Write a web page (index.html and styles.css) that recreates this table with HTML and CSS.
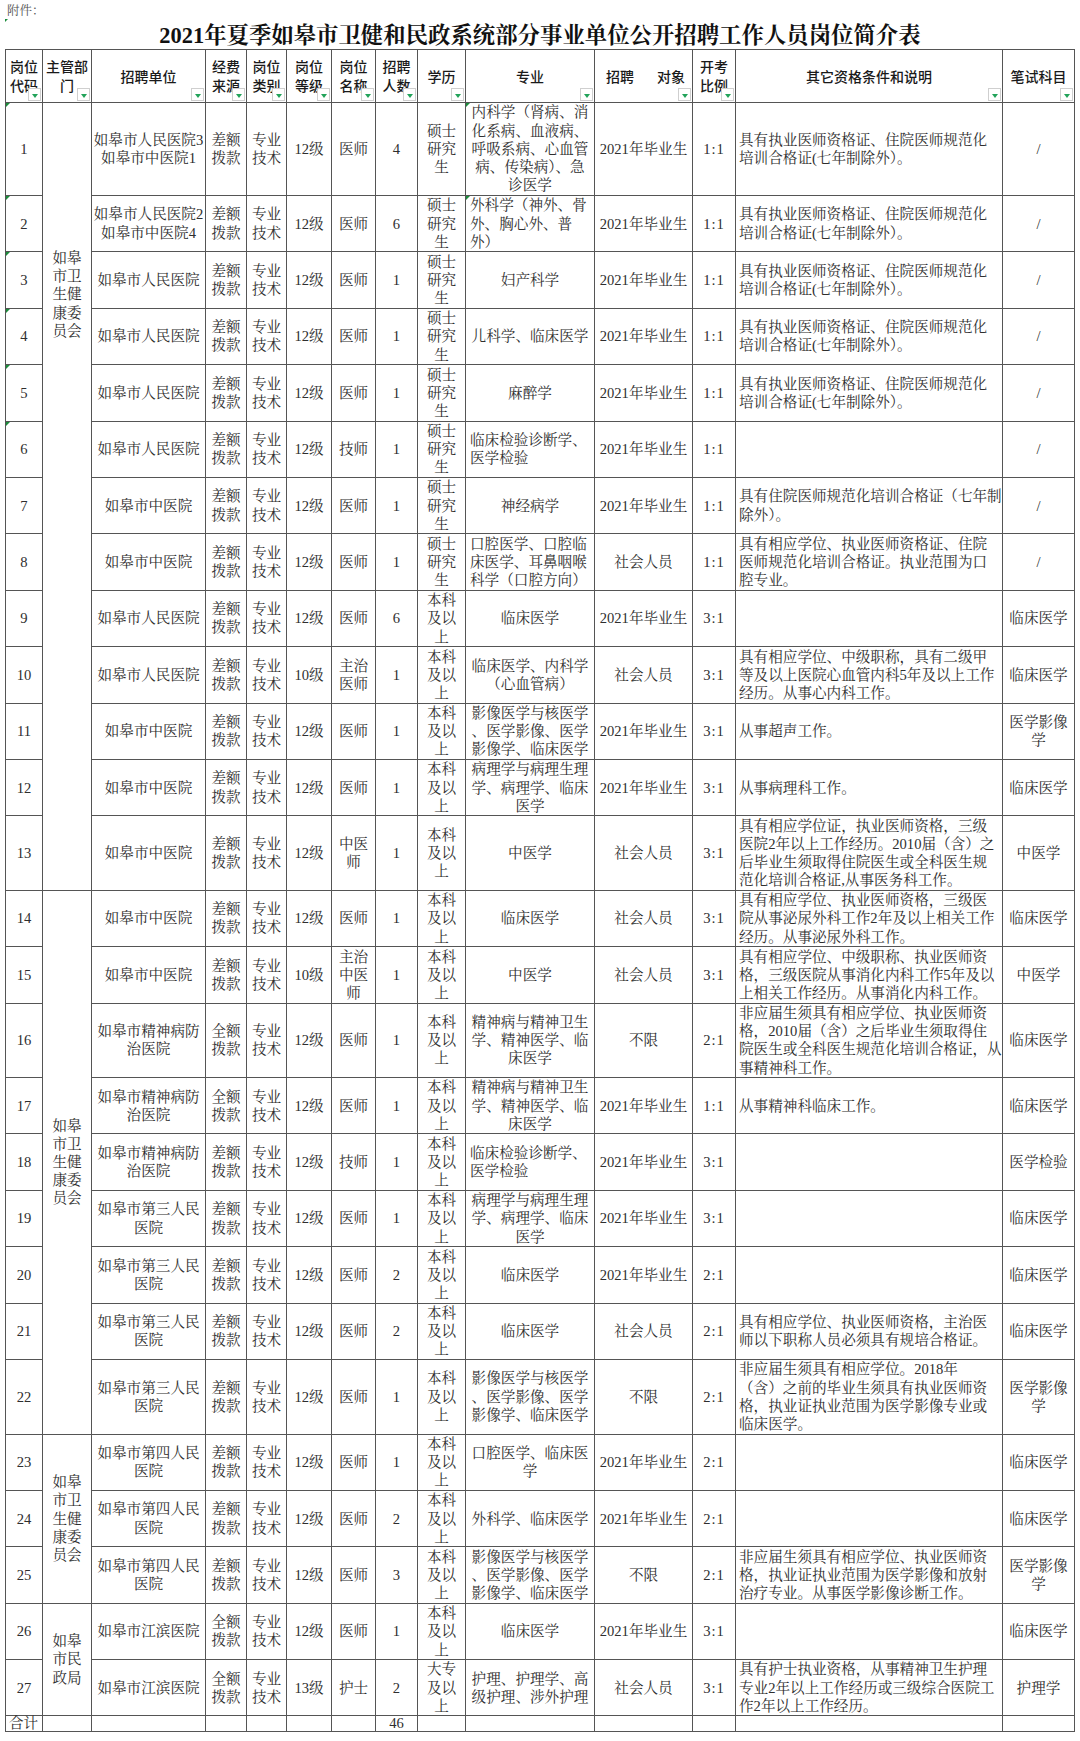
FILE: index.html
```html
<!DOCTYPE html>
<html lang="zh-CN">
<head>
<meta charset="utf-8">
<title>2021年夏季如皋市卫健和民政系统部分事业单位公开招聘工作人员岗位简介表</title>
<link rel="stylesheet" href="styles.css">
</head>
<body>
<div class="page">
  <div class="note">附件：<span class="nmk"></span></div>
  <h1 class="title">2021年夏季如皋市卫健和民政系统部分事业单位公开招聘工作人员岗位简介表</h1>
  <table class="tbl">
    <colgroup>
      <col class="w1"><col class="w2"><col class="w3"><col class="w4"><col class="w5"><col class="w6"><col class="w7"><col class="w8"><col class="w9"><col class="w10"><col class="w11"><col class="w12"><col class="w13"><col class="w14">
    </colgroup>
    <thead>
      <tr class="rh">
        <th>岗位<br>代码<span class="fb"></span></th>
        <th>主管部<br>门<span class="fb"></span></th>
        <th>招聘单位<span class="fb"></span></th>
        <th>经费<br>来源<span class="fb"></span></th>
        <th>岗位<br>类别<span class="fb"></span></th>
        <th>岗位<br>等级<span class="fb"></span></th>
        <th>岗位<br>名称<span class="fb"></span></th>
        <th>招聘<br>人数<span class="fb"></span></th>
        <th>学历<span class="fb"></span></th>
        <th>专业<span class="fb"></span></th>
        <th class="tgt"><span class="sp">招聘</span><span>对象</span><span class="fb"></span></th>
        <th>开考<br>比例<span class="fb"></span></th>
        <th>其它资格条件和说明<span class="fb"></span></th>
        <th>笔试科目<span class="fb"></span></th>
      </tr>
    </thead>
    <tbody>
      <tr class="r93">
        <td class="mk">1</td>
        <td rowspan="13" class="dept dtop">如皋<br>市卫<br>生健<br>康委<br>员会</td>
        <td class="u">如皋市人民医院3<br>如皋市中医院1</td>
        <td>差额<br>拨款</td><td>专业<br>技术</td><td>12级</td><td>医师</td><td>4</td>
        <td>硕士<br>研究<br>生</td>
        <td class="m mk">内科学（肾病、消<br>化系病、血液病、<br>呼吸系病、心血管<br>病、传染病）、急<br>诊医学</td>
        <td>2021年毕业生</td><td class="ra">1:1</td>
        <td class="q">具有执业医师资格证、住院医师规范化<br>培训合格证(七年制除外）。</td>
        <td>/</td>
      </tr>
      <tr class="rs">
        <td class="mk">2</td>
        <td class="u">如皋市人民医院2<br>如皋市中医院4</td>
        <td>差额<br>拨款</td><td>专业<br>技术</td><td>12级</td><td>医师</td><td>6</td>
        <td>硕士<br>研究<br>生</td>
        <td class="m ml mk">外科学（神外、骨<br>外、胸心外、普<br>外）</td>
        <td>2021年毕业生</td><td class="ra">1:1</td>
        <td class="q">具有执业医师资格证、住院医师规范化<br>培训合格证(七年制除外）。</td>
        <td>/</td>
      </tr>
      <tr class="rs">
        <td class="mk">3</td>
        <td class="u">如皋市人民医院</td>
        <td>差额<br>拨款</td><td>专业<br>技术</td><td>12级</td><td>医师</td><td>1</td>
        <td>硕士<br>研究<br>生</td>
        <td class="m">妇产科学</td>
        <td>2021年毕业生</td><td class="ra">1:1</td>
        <td class="q">具有执业医师资格证、住院医师规范化<br>培训合格证(七年制除外）。</td>
        <td>/</td>
      </tr>
      <tr class="rs">
        <td class="mk">4</td>
        <td class="u">如皋市人民医院</td>
        <td>差额<br>拨款</td><td>专业<br>技术</td><td>12级</td><td>医师</td><td>1</td>
        <td>硕士<br>研究<br>生</td>
        <td class="m">儿科学、临床医学</td>
        <td>2021年毕业生</td><td class="ra">1:1</td>
        <td class="q">具有执业医师资格证、住院医师规范化<br>培训合格证(七年制除外）。</td>
        <td>/</td>
      </tr>
      <tr class="rs">
        <td class="mk">5</td>
        <td class="u">如皋市人民医院</td>
        <td>差额<br>拨款</td><td>专业<br>技术</td><td>12级</td><td>医师</td><td>1</td>
        <td>硕士<br>研究<br>生</td>
        <td class="m">麻醉学</td>
        <td>2021年毕业生</td><td class="ra">1:1</td>
        <td class="q">具有执业医师资格证、住院医师规范化<br>培训合格证(七年制除外）。</td>
        <td>/</td>
      </tr>
      <tr class="rs">
        <td class="mk">6</td>
        <td class="u">如皋市人民医院</td>
        <td>差额<br>拨款</td><td>专业<br>技术</td><td>12级</td><td>技师</td><td>1</td>
        <td>硕士<br>研究<br>生</td>
        <td class="m ml">临床检验诊断学、<br>医学检验</td>
        <td>2021年毕业生</td><td class="ra">1:1</td>
        <td class="q"></td>
        <td>/</td>
      </tr>
      <tr class="rs">
        <td>7</td>
        <td class="u">如皋市中医院</td>
        <td>差额<br>拨款</td><td>专业<br>技术</td><td>12级</td><td>医师</td><td>1</td>
        <td>硕士<br>研究<br>生</td>
        <td class="m">神经病学</td>
        <td>2021年毕业生</td><td class="ra">1:1</td>
        <td class="q">具有住院医师规范化培训合格证（七年制<br>除外）。</td>
        <td>/</td>
      </tr>
      <tr class="rs">
        <td>8</td>
        <td class="u">如皋市中医院</td>
        <td>差额<br>拨款</td><td>专业<br>技术</td><td>12级</td><td>医师</td><td>1</td>
        <td>硕士<br>研究<br>生</td>
        <td class="m ml">口腔医学、口腔临<br>床医学、耳鼻咽喉<br>科学（口腔方向）</td>
        <td>社会人员</td><td class="ra">1:1</td>
        <td class="q">具有相应学位、执业医师资格证、住院<br>医师规范化培训合格证。执业范围为口<br>腔专业。</td>
        <td>/</td>
      </tr>
      <tr class="rs">
        <td>9</td>
        <td class="u">如皋市人民医院</td>
        <td>差额<br>拨款</td><td>专业<br>技术</td><td>12级</td><td>医师</td><td>6</td>
        <td>本科<br>及以<br>上</td>
        <td class="m">临床医学</td>
        <td>2021年毕业生</td><td class="ra">3:1</td>
        <td class="q"></td>
        <td>临床医学</td>
      </tr>
      <tr class="rs">
        <td>10</td>
        <td class="u">如皋市人民医院</td>
        <td>差额<br>拨款</td><td>专业<br>技术</td><td>10级</td><td>主治<br>医师</td><td>1</td>
        <td>本科<br>及以<br>上</td>
        <td class="m">临床医学、内科学<br>（心血管病）</td>
        <td>社会人员</td><td class="ra">3:1</td>
        <td class="q">具有相应学位、中级职称，具有二级甲<br>等及以上医院心血管内科5年及以上工作<br>经历。从事心内科工作。</td>
        <td>临床医学</td>
      </tr>
      <tr class="rs">
        <td>11</td>
        <td class="u">如皋市中医院</td>
        <td>差额<br>拨款</td><td>专业<br>技术</td><td>12级</td><td>医师</td><td>1</td>
        <td>本科<br>及以<br>上</td>
        <td class="m">影像医学与核医学<br>、医学影像、医学<br>影像学、临床医学</td>
        <td>2021年毕业生</td><td class="ra">3:1</td>
        <td class="q">从事超声工作。</td>
        <td>医学影像<br>学</td>
      </tr>
      <tr class="rs">
        <td>12</td>
        <td class="u">如皋市中医院</td>
        <td>差额<br>拨款</td><td>专业<br>技术</td><td>12级</td><td>医师</td><td>1</td>
        <td>本科<br>及以<br>上</td>
        <td class="m">病理学与病理生理<br>学、病理学、临床<br>医学</td>
        <td>2021年毕业生</td><td class="ra">3:1</td>
        <td class="q">从事病理科工作。</td>
        <td>临床医学</td>
      </tr>
      <tr class="rt">
        <td>13</td>
        <td class="u">如皋市中医院</td>
        <td>差额<br>拨款</td><td>专业<br>技术</td><td>12级</td><td>中医<br>师</td><td>1</td>
        <td>本科<br>及以<br>上</td>
        <td class="m">中医学</td>
        <td>社会人员</td><td class="ra">3:1</td>
        <td class="q">具有相应学位证，执业医师资格，三级<br>医院2年以上工作经历。2010届（含）之<br>后毕业生须取得住院医生或全科医生规<br>范化培训合格证,从事医务科工作。</td>
        <td>中医学</td>
      </tr>
      <tr class="rs">
        <td>14</td>
        <td rowspan="9" class="dept">如皋<br>市卫<br>生健<br>康委<br>员会</td>
        <td class="u">如皋市中医院</td>
        <td>差额<br>拨款</td><td>专业<br>技术</td><td>12级</td><td>医师</td><td>1</td>
        <td>本科<br>及以<br>上</td>
        <td class="m">临床医学</td>
        <td>社会人员</td><td class="ra">3:1</td>
        <td class="q">具有相应学位、执业医师资格，三级医<br>院从事泌尿外科工作2年及以上相关工作<br>经历。从事泌尿外科工作。</td>
        <td>临床医学</td>
      </tr>
      <tr class="rs">
        <td>15</td>
        <td class="u">如皋市中医院</td>
        <td>差额<br>拨款</td><td>专业<br>技术</td><td>10级</td><td>主治<br>中医<br>师</td><td>1</td>
        <td>本科<br>及以<br>上</td>
        <td class="m">中医学</td>
        <td>社会人员</td><td class="ra">3:1</td>
        <td class="q">具有相应学位、中级职称、执业医师资<br>格，三级医院从事消化内科工作5年及以<br>上相关工作经历。从事消化内科工作。</td>
        <td>中医学</td>
      </tr>
      <tr class="rt">
        <td>16</td>
        <td class="u">如皋市精神病防<br>治医院</td>
        <td>全额<br>拨款</td><td>专业<br>技术</td><td>12级</td><td>医师</td><td>1</td>
        <td>本科<br>及以<br>上</td>
        <td class="m">精神病与精神卫生<br>学、精神医学、临<br>床医学</td>
        <td>不限</td><td class="ra">2:1</td>
        <td class="q">非应届生须具有相应学位、执业医师资<br>格，2010届（含）之后毕业生须取得住<br>院医生或全科医生规范化培训合格证，从<br>事精神科工作。</td>
        <td>临床医学</td>
      </tr>
      <tr class="rs">
        <td>17</td>
        <td class="u">如皋市精神病防<br>治医院</td>
        <td>全额<br>拨款</td><td>专业<br>技术</td><td>12级</td><td>医师</td><td>1</td>
        <td>本科<br>及以<br>上</td>
        <td class="m">精神病与精神卫生<br>学、精神医学、临<br>床医学</td>
        <td>2021年毕业生</td><td class="ra">1:1</td>
        <td class="q">从事精神科临床工作。</td>
        <td>临床医学</td>
      </tr>
      <tr class="rs">
        <td>18</td>
        <td class="u">如皋市精神病防<br>治医院</td>
        <td>差额<br>拨款</td><td>专业<br>技术</td><td>12级</td><td>技师</td><td>1</td>
        <td>本科<br>及以<br>上</td>
        <td class="m ml">临床检验诊断学、<br>医学检验</td>
        <td>2021年毕业生</td><td class="ra">3:1</td>
        <td class="q"></td>
        <td>医学检验</td>
      </tr>
      <tr class="rs">
        <td>19</td>
        <td class="u">如皋市第三人民<br>医院</td>
        <td>差额<br>拨款</td><td>专业<br>技术</td><td>12级</td><td>医师</td><td>1</td>
        <td>本科<br>及以<br>上</td>
        <td class="m">病理学与病理生理<br>学、病理学、临床<br>医学</td>
        <td>2021年毕业生</td><td class="ra">3:1</td>
        <td class="q"></td>
        <td>临床医学</td>
      </tr>
      <tr class="rs">
        <td>20</td>
        <td class="u">如皋市第三人民<br>医院</td>
        <td>差额<br>拨款</td><td>专业<br>技术</td><td>12级</td><td>医师</td><td>2</td>
        <td>本科<br>及以<br>上</td>
        <td class="m">临床医学</td>
        <td>2021年毕业生</td><td class="ra">2:1</td>
        <td class="q"></td>
        <td>临床医学</td>
      </tr>
      <tr class="rs">
        <td>21</td>
        <td class="u">如皋市第三人民<br>医院</td>
        <td>差额<br>拨款</td><td>专业<br>技术</td><td>12级</td><td>医师</td><td>2</td>
        <td>本科<br>及以<br>上</td>
        <td class="m">临床医学</td>
        <td>社会人员</td><td class="ra">2:1</td>
        <td class="q">具有相应学位、执业医师资格，主治医<br>师以下职称人员必须具有规培合格证。</td>
        <td>临床医学</td>
      </tr>
      <tr class="rt">
        <td>22</td>
        <td class="u">如皋市第三人民<br>医院</td>
        <td>差额<br>拨款</td><td>专业<br>技术</td><td>12级</td><td>医师</td><td>1</td>
        <td>本科<br>及以<br>上</td>
        <td class="m">影像医学与核医学<br>、医学影像、医学<br>影像学、临床医学</td>
        <td>不限</td><td class="ra">2:1</td>
        <td class="q">非应届生须具有相应学位。2018年<br>（含）之前的毕业生须具有执业医师资<br>格，执业证执业范围为医学影像专业或<br>临床医学。</td>
        <td>医学影像<br>学</td>
      </tr>
      <tr class="rs">
        <td>23</td>
        <td rowspan="3" class="dept">如皋<br>市卫<br>生健<br>康委<br>员会</td>
        <td class="u">如皋市第四人民<br>医院</td>
        <td>差额<br>拨款</td><td>专业<br>技术</td><td>12级</td><td>医师</td><td>1</td>
        <td>本科<br>及以<br>上</td>
        <td class="m">口腔医学、临床医<br>学</td>
        <td>2021年毕业生</td><td class="ra">2:1</td>
        <td class="q"></td>
        <td>临床医学</td>
      </tr>
      <tr class="rs">
        <td>24</td>
        <td class="u">如皋市第四人民<br>医院</td>
        <td>差额<br>拨款</td><td>专业<br>技术</td><td>12级</td><td>医师</td><td>2</td>
        <td>本科<br>及以<br>上</td>
        <td class="m">外科学、临床医学</td>
        <td>2021年毕业生</td><td class="ra">2:1</td>
        <td class="q"></td>
        <td>临床医学</td>
      </tr>
      <tr class="rs">
        <td>25</td>
        <td class="u">如皋市第四人民<br>医院</td>
        <td>差额<br>拨款</td><td>专业<br>技术</td><td>12级</td><td>医师</td><td>3</td>
        <td>本科<br>及以<br>上</td>
        <td class="m">影像医学与核医学<br>、医学影像、医学<br>影像学、临床医学</td>
        <td>不限</td><td class="ra">2:1</td>
        <td class="q">非应届生须具有相应学位、执业医师资<br>格，执业证执业范围为医学影像和放射<br>治疗专业。从事医学影像诊断工作。</td>
        <td>医学影像<br>学</td>
      </tr>
      <tr class="rs">
        <td>26</td>
        <td rowspan="2" class="dept">如皋<br>市民<br>政局</td>
        <td class="u">如皋市江滨医院</td>
        <td>全额<br>拨款</td><td>专业<br>技术</td><td>12级</td><td>医师</td><td>1</td>
        <td>本科<br>及以<br>上</td>
        <td class="m">临床医学</td>
        <td>2021年毕业生</td><td class="ra">3:1</td>
        <td class="q"></td>
        <td>临床医学</td>
      </tr>
      <tr class="rs">
        <td>27</td>
        <td class="u">如皋市江滨医院</td>
        <td>全额<br>拨款</td><td>专业<br>技术</td><td>13级</td><td>护士</td><td>2</td>
        <td>大专<br>及以<br>上</td>
        <td class="m">护理、护理学、高<br>级护理、涉外护理</td>
        <td>社会人员</td><td class="ra">3:1</td>
        <td class="q">具有护士执业资格，从事精神卫生护理<br>专业2年以上工作经历或三级综合医院工<br>作2年以上工作经历。</td>
        <td>护理学</td>
      </tr>
      <tr class="rsum">
        <td class="sum">合计</td>
        <td></td><td></td><td></td><td></td><td></td><td></td>
        <td>46</td>
        <td></td><td></td><td></td><td></td><td></td><td></td>
      </tr>
    </tbody>
  </table>
</div>
</body>
</html>
```

FILE: styles.css
```css
html, body {
  margin: 0;
  padding: 0;
  background: #ffffff;
}

.page {
  width: 1080px;
}

.note {
  position: relative;
  height: 23px;
  padding-left: 7px;
  font-family: "Liberation Serif", "Noto Serif CJK SC", "Noto Sans CJK SC", serif;
  font-size: 12.5px;
  line-height: 23px;
  color: #555555;
}

.nmk {
  position: absolute;
  left: 5px;
  top: 19px;
  border-top: 3px solid #1c8c3c;
  border-right: 3px solid transparent;
}

.title {
  margin: 0;
  height: 26px;
  font-family: "Liberation Serif", "Noto Serif CJK SC", "Noto Sans CJK SC", serif;
  font-size: 22.4px;
  font-weight: bold;
  line-height: 26px;
  text-align: center;
  color: #111111;
}

.tbl {
  margin-left: 5px;
  width: 1069px;
  table-layout: fixed;
  border-collapse: collapse;
}

.w1 { width: 37px; }
.w2 { width: 49px; }
.w3 { width: 114px; }
.w4 { width: 41px; }
.w5 { width: 40px; }
.w6 { width: 45px; }
.w7 { width: 44px; }
.w8 { width: 42px; }
.w9 { width: 48px; }
.w10 { width: 129px; }
.w11 { width: 98px; }
.w12 { width: 43px; }
.w13 { width: 267px; }
.w14 { width: 72px; }

.tbl th,
.tbl td {
  border: 1px solid #555555;
  padding: 0 2px;
  vertical-align: middle;
  text-align: center;
}

.tbl th {
  position: relative;
  font-family: "Noto Sans CJK SC", sans-serif;
  font-size: 14px;
  font-weight: 500;
  line-height: 19px;
  color: #1a1a1a;
  background: #ffffff;
  white-space: nowrap;
}

.tbl td {
  font-family: "Liberation Serif", "Noto Serif CJK SC", "Noto Sans CJK SC", serif;
  font-size: 14.6px;
  line-height: 18.2px;
  color: #2e2e2e;
  white-space: nowrap;
}

.rh { height: 53px; }
.r93 { height: 93px; }
.rs { height: 56.4px; }
.rt { height: 74.5px; }
.rsum { height: 16px; }

.tbl .rsum td {
  line-height: 15px;
}

.tbl th.tgt {
  text-align: left;
  padding-left: 11px;
}

.sp {
  display: inline-block;
  margin-right: 23px;
}

.fb {
  position: absolute;
  right: 1px;
  bottom: 1px;
  width: 13px;
  height: 13px;
  box-sizing: border-box;
  border: 1px solid #cfcfcf;
  background: #ffffff;
}

.fb::after {
  content: "";
  position: absolute;
  left: 2.5px;
  top: 5px;
  border-left: 3.5px solid transparent;
  border-right: 3.5px solid transparent;
  border-top: 4px solid #22a35a;
}

.tbl td.mk {
  position: relative;
}

.tbl td.mk::before {
  content: "";
  position: absolute;
  left: 0;
  top: 0;
  border-top: 4px solid #1c8c3c;
  border-right: 4px solid transparent;
}

.tbl td.dept {
  white-space: normal;
}

.tbl td.dtop {
  vertical-align: top;
  padding-top: 146px;
}

.tbl td.u {
  padding: 0;
}

.tbl td.m {
  padding: 0 4px;
}

.tbl td.ml {
  text-align: left;
}

.tbl td.ra {
  letter-spacing: 1px;
}

.tbl td.q {
  text-align: left;
  padding-left: 3px;
}

.tbl td.sum {
  text-align: left;
  padding-left: 3px;
}
```
